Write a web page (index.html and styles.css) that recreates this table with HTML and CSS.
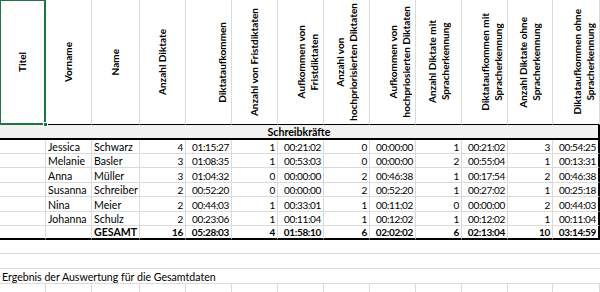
FILE: index.html
```html
<!DOCTYPE html>
<html lang="de">
<head>
<meta charset="utf-8">
<title>Schreibkräfte</title>
<link rel="stylesheet" href="styles.css">
</head>
<body>
<table class="sheet">
  <colgroup>
    <col class="w46"><col class="w46"><col class="w48"><col class="w46"><col class="w46"><col class="w46"><col class="w46"><col class="w46"><col class="w46"><col class="w46"><col class="w46"><col class="w45"><col class="w47">
  </colgroup>
  <tr class="r-head">
    <td class="hd sel"><div class="hbox"><span class="rot">Titel</span></div><span class="handle"></span></td>
    <td class="hd"><div class="hbox"><span class="rot">Vorname</span></div></td>
    <td class="hd"><div class="hbox"><span class="rot">Name</span></div></td>
    <td class="hd"><div class="hbox"><span class="rot">Anzahl Diktate</span></div></td>
    <td class="hd"><div class="hbox end"><span class="rot">Diktataufkommen</span></div></td>
    <td class="hd"><div class="hbox"><span class="rot">Anzahl von Fristdiktaten</span></div></td>
    <td class="hd"><div class="hbox end"><span class="rot">Aufkommen von<br>Fristdiktaten</span></div></td>
    <td class="hd"><div class="hbox"><span class="rot">Anzahl von<br>hochpriorisierten Diktaten</span></div></td>
    <td class="hd"><div class="hbox end"><span class="rot">Aufkommen von<br>hochpriosierten Diktaten</span></div></td>
    <td class="hd"><div class="hbox"><span class="rot">Anzahl Diktate mit<br>Spracherkennung</span></div></td>
    <td class="hd"><div class="hbox end"><span class="rot">Diktataufkommen mit<br>Spracherkennung</span></div></td>
    <td class="hd"><div class="hbox"><span class="rot">Anzahl Diktate ohne<br>Spracherkennung</span></div></td>
    <td class="hd"><div class="hbox end"><span class="rot">Diktataufkommen ohne<br>Spracherkennung</span></div></td>
  </tr>
  <tr class="h15">
    <td class="group" colspan="13">Schreibkräfte</td>
  </tr>
  <tr class="h14 data">
    <td></td><td>Jessica</td><td>Schwarz</td><td class="n">4</td><td class="n">01:15:27</td><td class="n">1</td><td class="n">00:21:02</td><td class="n">0</td><td class="n">00:00:00</td><td class="n">1</td><td class="n">00:21:02</td><td class="n">3</td><td class="n last">00:54:25</td>
  </tr>
  <tr class="h14 data">
    <td></td><td>Melanie</td><td>Basler</td><td class="n">3</td><td class="n">01:08:35</td><td class="n">1</td><td class="n">00:53:03</td><td class="n">0</td><td class="n">00:00:00</td><td class="n">2</td><td class="n">00:55:04</td><td class="n">1</td><td class="n last">00:13:31</td>
  </tr>
  <tr class="h15 data">
    <td></td><td>Anna</td><td>Müller</td><td class="n">3</td><td class="n">01:04:32</td><td class="n">0</td><td class="n">00:00:00</td><td class="n">2</td><td class="n">00:46:38</td><td class="n">1</td><td class="n">00:17:54</td><td class="n">2</td><td class="n last">00:46:38</td>
  </tr>
  <tr class="h14 data">
    <td></td><td>Susanna</td><td>Schreiber</td><td class="n">2</td><td class="n">00:52:20</td><td class="n">0</td><td class="n">00:00:00</td><td class="n">2</td><td class="n">00:52:20</td><td class="n">1</td><td class="n">00:27:02</td><td class="n">1</td><td class="n last">00:25:18</td>
  </tr>
  <tr class="h15 data">
    <td></td><td>Nina</td><td>Meier</td><td class="n">2</td><td class="n">00:44:03</td><td class="n">1</td><td class="n">00:33:01</td><td class="n">1</td><td class="n">00:11:02</td><td class="n">0</td><td class="n">00:00:00</td><td class="n">2</td><td class="n last">00:44:03</td>
  </tr>
  <tr class="h14 data">
    <td></td><td>Johanna</td><td>Schulz</td><td class="n">2</td><td class="n">00:23:06</td><td class="n">1</td><td class="n">00:11:04</td><td class="n">1</td><td class="n">00:12:02</td><td class="n">1</td><td class="n">00:12:02</td><td class="n">1</td><td class="n last">00:11:04</td>
  </tr>
  <tr class="h14 data total">
    <td></td><td></td><td class="lbl">GESAMT</td><td class="n">16</td><td class="n">05:28:03</td><td class="n">4</td><td class="n">01:58:10</td><td class="n">6</td><td class="n">02:02:02</td><td class="n">6</td><td class="n">02:13:04</td><td class="n">10</td><td class="n last">03:14:59</td>
  </tr>
  <tr class="h14">
    <td class="span" colspan="13"></td>
  </tr>
  <tr class="h15">
    <td class="span" colspan="13"></td>
  </tr>
  <tr class="h15">
    <td class="span" colspan="13">Ergebnis der Auswertung für die Gesamtdaten</td>
  </tr>
  <tr class="h14 tail">
    <td></td><td></td><td></td><td></td><td></td><td></td><td></td><td></td><td></td><td></td><td></td><td></td><td></td>
  </tr>
</table>
</body>
</html>
```
FILE: styles.css
```css
html, body {
  margin: 0;
  padding: 0;
  background: #ffffff;
}

body {
  width: 600px;
  height: 292px;
  overflow: hidden;
  font-family: Lato, "Liberation Sans", sans-serif;
  font-size: 10.6px;
  color: #000000;
}

.sheet {
  border-collapse: separate;
  border-spacing: 0;
  table-layout: fixed;
  width: 600px;
}

.w45 { width: 45px; }
.w46 { width: 46px; }
.w47 { width: 47px; }
.w48 { width: 48px; }

.sheet td {
  box-sizing: border-box;
  padding: 0 2px;
  border-right: 1px solid #dadada;
  border-bottom: 1px solid #dadada;
  white-space: nowrap;
  overflow: hidden;
  vertical-align: bottom;
  line-height: 12px;
}

.r-head { height: 125px; }
.h14 { height: 14px; }
.h15 { height: 15px; }

.sheet td.hd {
  padding: 0;
  vertical-align: middle;
  border-bottom: 1px solid #000000;
  font-size: 10px;
  font-weight: 700;
}

.hbox {
  height: 124px;
  display: flex;
  align-items: center;
  justify-content: center;
}

.hbox.end {
  justify-content: flex-end;
  padding-right: 2px;
}

.rot {
  writing-mode: vertical-rl;
  transform: rotate(180deg);
  text-align: center;
  line-height: 13px;
}

.sheet td.sel {
  position: relative;
  overflow: visible;
  border-right: 1px solid #217346;
  border-bottom: 1px solid #217346;
  box-shadow: inset 1px 1px 0 #217346, inset -1px -1px 0 #217346;
}

.handle {
  position: absolute;
  right: -3px;
  bottom: -3px;
  width: 5px;
  height: 5px;
  background: #217346;
  box-sizing: border-box;
  border: 1px solid #ffffff;
}

.sheet td.group {
  background: #f2f2f2;
  font-weight: 700;
  text-align: center;
  border-right: 2px solid #000000;
  border-bottom: 2px solid #000000;
}

.sheet td.n {
  text-align: right;
  font-size: 10px;
  letter-spacing: -0.35px;
  padding-right: 2px;
}

.sheet td.lbl {
  text-align: right;
}

.sheet td.last {
  border-right: 2px solid #000000;
}

.total td {
  font-weight: 700;
  border-bottom: 2px solid #000000;
}

.sheet td.span {
  border-right: none;
}

.tail td {
  border-bottom: none;
}
```
